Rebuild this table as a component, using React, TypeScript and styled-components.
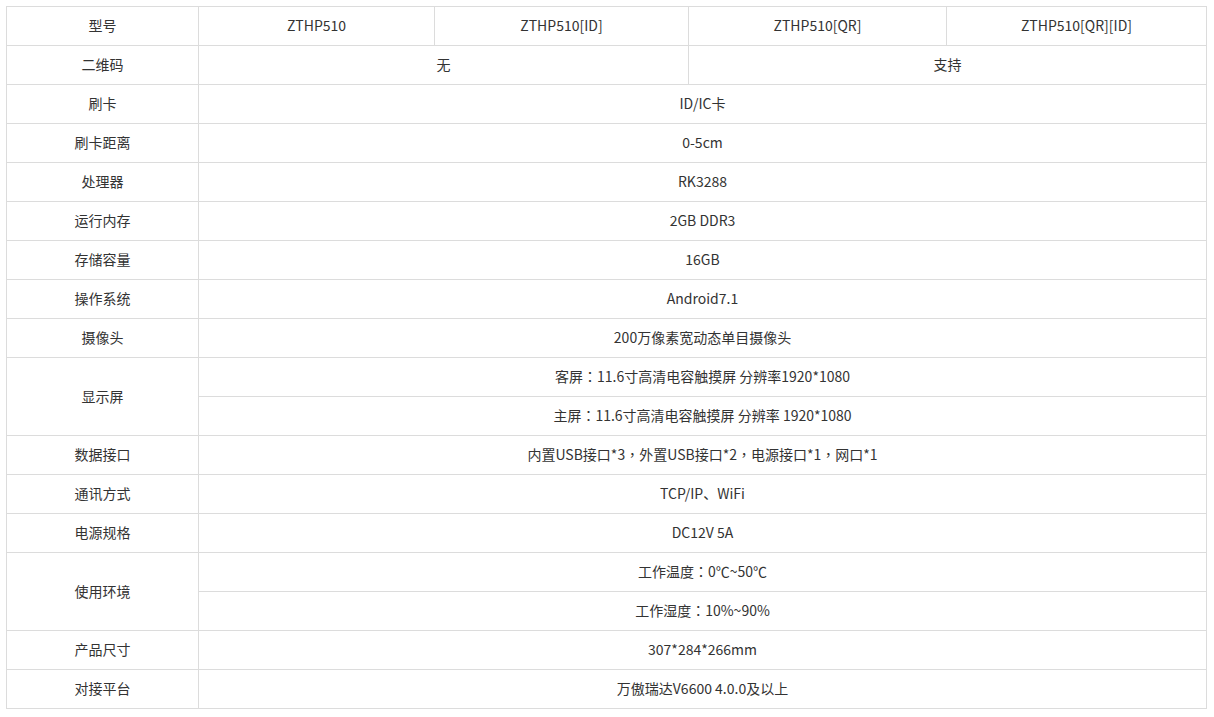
import React from "react";
import styled, { createGlobalStyle } from "styled-components";

const Global = createGlobalStyle`
  html, body { margin: 0; padding: 0; background: #fff; }
  body { font-family: "Microsoft YaHei", "Noto Sans CJK SC", "Noto Sans", sans-serif; }
`;

const Wrap = styled.div`
  padding: 6px 0 0 6px;
`;

const Table = styled.table`
  border-collapse: collapse;
  table-layout: fixed;
  width: 1200px;
  font-size: 14px;
  color: #333;
`;

const Cell = styled.td`
  border: 1px solid #dcdcdc;
  height: 39px;
  padding: 0 0 2px 0;
  text-align: center;
  vertical-align: middle;
  line-height: 20px;
  white-space: nowrap;
  box-sizing: border-box;
`;

const Punct = styled.span`
  font-family: "Noto Sans CJK TC", "Noto Sans CJK SC", sans-serif;
`;

const fmt = (s: string) =>
  s.split(/([：，])/).map((part, i) =>
    part === "：" || part === "，" ? <Punct key={i}>{part}</Punct> : <React.Fragment key={i}>{part}</React.Fragment>
  );

const simple: [string, string][] = [
  ["刷卡", "ID/IC卡"],
  ["刷卡距离", "0-5cm"],
  ["处理器", "RK3288"],
  ["运行内存", "2GB DDR3"],
  ["存储容量", "16GB"],
  ["操作系统", "Android7.1"],
  ["摄像头", "200万像素宽动态单目摄像头"],
];

const simple2: [string, string][] = [
  ["数据接口", "内置USB接口*3，外置USB接口*2，电源接口*1，网口*1"],
  ["通讯方式", "TCP/IP、WiFi"],
  ["电源规格", "DC12V 5A"],
];

const simple3: [string, string][] = [
  ["产品尺寸", "307*284*266mm"],
  ["对接平台", "万傲瑞达V6600 4.0.0及以上"],
];

const SimpleRows = ({ rows }: { rows: [string, string][] }) => (
  <>
    {rows.map(([l, v]) => (
      <tr key={l}>
        <Cell>{l}</Cell>
        <Cell colSpan={4}>{fmt(v)}</Cell>
      </tr>
    ))}
  </>
);

export default function App() {
  return (
    <>
      <Global />
      <Wrap>
        <Table>
          <colgroup>
            <col style={{ width: 192 }} />
            <col style={{ width: 236 }} />
            <col style={{ width: 254 }} />
            <col style={{ width: 258 }} />
            <col style={{ width: 260 }} />
          </colgroup>
          <tbody>
            <tr>
              <Cell>型号</Cell>
              <Cell>ZTHP510</Cell>
              <Cell>ZTHP510[ID]</Cell>
              <Cell>ZTHP510[QR]</Cell>
              <Cell>ZTHP510[QR][ID]</Cell>
            </tr>
            <tr>
              <Cell>二维码</Cell>
              <Cell colSpan={2}>无</Cell>
              <Cell colSpan={2}>支持</Cell>
            </tr>
            <SimpleRows rows={simple} />
            <tr>
              <Cell rowSpan={2}>显示屏</Cell>
              <Cell colSpan={4}>{fmt("客屏：11.6寸高清电容触摸屏 分辨率1920*1080")}</Cell>
            </tr>
            <tr>
              <Cell colSpan={4}>{fmt("主屏：11.6寸高清电容触摸屏 分辨率 1920*1080")}</Cell>
            </tr>
            <SimpleRows rows={simple2} />
            <tr>
              <Cell rowSpan={2}>使用环境</Cell>
              <Cell colSpan={4}>{fmt("工作温度：0℃~50℃")}</Cell>
            </tr>
            <tr>
              <Cell colSpan={4}>{fmt("工作湿度：10%~90%")}</Cell>
            </tr>
            <SimpleRows rows={simple3} />
          </tbody>
        </Table>
      </Wrap>
    </>
  );
}
